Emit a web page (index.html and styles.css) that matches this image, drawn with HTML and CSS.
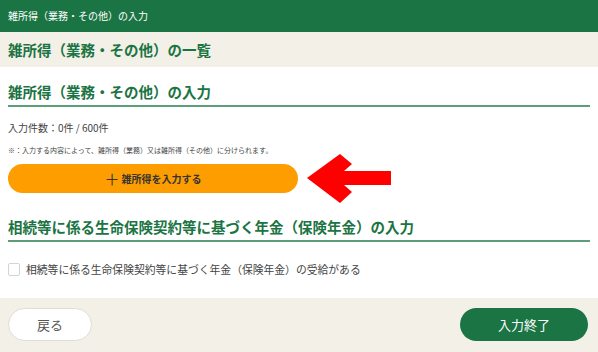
FILE: index.html
```html
<!DOCTYPE html>
<html lang="ja">
<head>
  <meta charset="UTF-8" />
  <title>雑所得（業務・その他）の入力</title>
  <link rel="stylesheet" href="styles.css">
</head>
<body>

  <!-- ヘッダー -->
  <div class="topbar">雑所得（業務・その他）の入力</div>

  <div class="pagehead">
    <h1>雑所得（業務・その他）の一覧</h1>
  </div>

  <!-- 本体 -->
  <div class="content">
    <h2 class="sectitle">雑所得（業務・その他）の入力</h2>
    <p class="count">入力件数：0件 / 600件</p>
    <p class="note">※：入力する内容によって、雑所得（業務）又は雑所得（その他）に分けられます。</p>

    <div class="addrow">
      <button class="addbtn"><span class="plus">＋</span>雑所得を入力する</button>
      <svg class="arrow" width="86" height="52" viewBox="0 0 86 52">
        <polygon fill="#ff0000" points="0,25 33,1 45,11 37,18 84,18 84,32 37,32 45,39 33,50" />
      </svg>
    </div>

    <h2 class="sectitle second">相続等に係る生命保険契約等に基づく年金（保険年金）の入力</h2>
    <label class="check">
      <span class="box"></span>
      相続等に係る生命保険契約等に基づく年金（保険年金）の受給がある
    </label>
  </div>

  <!-- フッター -->
  <div class="footer">
    <button class="backbtn">戻る</button>
    <button class="donebtn">入力終了</button>
  </div>

</body>
</html>
```

FILE: styles.css
```css
html, body {
  margin: 0;
  padding: 0;
  width: 100%;
  height: 100%;
  overflow: hidden;
  font-family: "Noto Sans CJK JP", "Noto Sans", sans-serif;
  background: #fff;
  color: #333;
}

/* ヘッダー */
.topbar {
  height: 32px;
  line-height: 32px;
  padding: 0 8px;
  background: #1b7443;
  color: #fff;
  font-size: 10px;
}

.pagehead {
  height: 35px;
  padding: 0 8px;
  background: #f3f0e8;
}

.pagehead h1 {
  margin: 0;
  line-height: 35px;
  font-size: 14.5px;
  font-weight: bold;
  color: #1b7443;
}

/* 本体 */
.content {
  padding: 15px 8px 21px;
}

.sectitle {
  margin: 0;
  padding-bottom: 3px;
  line-height: 20px;
  font-size: 14.5px;
  font-weight: bold;
  color: #1b7443;
  border-bottom: 2px solid #5c9e79;
}

.sectitle.second {
  margin-top: 24px;
}

.count {
  margin: 14px 0 0;
  line-height: 14px;
  font-size: 10px;
  color: #444;
}

.note {
  margin: 10px 0 0;
  line-height: 10px;
  font-size: 7px;
  color: #444;
}

.addrow {
  position: relative;
  margin-top: 9px;
}

.addbtn {
  display: flex;
  align-items: center;
  justify-content: center;
  width: 290px;
  height: 29px;
  border: none;
  border-radius: 15px;
  background: #fe9d00;
  color: #333;
  font-family: inherit;
  font-size: 10px;
  font-weight: bold;
  cursor: pointer;
}

.addbtn .plus {
  font-weight: normal;
  font-size: 15px;
  margin-right: 2px;
}

/* 注目用の矢印 */
.arrow {
  position: absolute;
  left: 299px;
  top: -11px;
}

.check {
  display: flex;
  align-items: center;
  gap: 6px;
  margin-top: 19px;
  line-height: 16px;
  font-size: 10.8px;
  color: #444;
}

.check .box {
  width: 10px;
  height: 11px;
  border: 1px solid #d4d4d4;
  border-radius: 2px;
  background: #fff;
}

/* フッター */
.footer {
  height: 54px;
  padding: 0 10px 0 8px;
  background: #f3f0e8;
  display: flex;
  align-items: center;
  justify-content: space-between;
}

.footer button {
  height: 33px;
  border-radius: 17px;
  font-family: inherit;
  font-size: 13px;
  cursor: pointer;
  margin-top: -2px;
}

.backbtn {
  width: 84px;
  background: #fff;
  border: 1px solid #e2ddd2;
  color: #555;
}

.donebtn {
  width: 128px;
  background: #1b7443;
  border: none;
  color: #fff;
}
```
